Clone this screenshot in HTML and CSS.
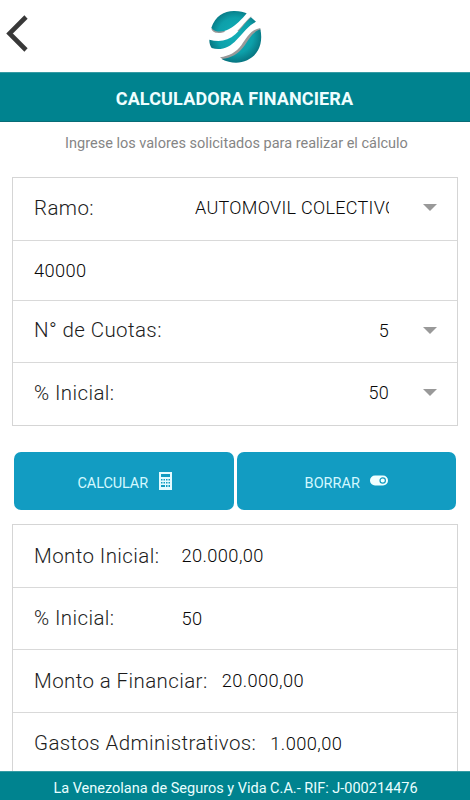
FILE: index.html
```html
<!DOCTYPE html>
<html lang="es">
<head>
<meta charset="utf-8">
<meta name="viewport" content="width=device-width">
<title>Calculadora Financiera</title>
<link rel="stylesheet" href="styles.css">
</head>
<body>
<div class="app">
  <header class="top">
    <svg class="back" viewBox="0 0 30 46" width="30" height="46"><path d="M26 7 9.500 23.500l16.500 16.500" fill="none" stroke="#383838" stroke-width="4.600"/></svg>
    <svg class="logo" viewBox="0 0 210 195" width="70" height="65">
      <defs>
        <radialGradient id="sea" gradientUnits="userSpaceOnUse" cx="106" cy="92" r="82"><stop offset="0" stop-color="#12adb6"/><stop offset=".65" stop-color="#0da0aa"/><stop offset="1" stop-color="#077480"/></radialGradient>
      </defs>
      <path d="M34 70C36 84 54 88 76 80L60 72Z" fill="#999"/>
      <path d="M34 68C46 32 74 17 104 18C120 18 132 21 140 25C126 42 108 62 86 73C66 83 44 82 34 68Z" fill="url(#sea)"/>
      <path d="M112 78C126 66 136 48 154 34L150 46L118 80Z" fill="#999"/>
      <path d="M28 104C58 112 84 108 106 88C124 72 134 54 153 37L168 50C144 62 130 84 110 104C88 128 62 138 35 129C30 122 28 114 28 104Z" fill="url(#sea)"/>
      <path d="M181 69C152 74 140 98 124 121C108 142 88 153 60 157L72 166C112 162 136 138 150 112C160 92 168 82 181 78Z" fill="#999"/>
      <path d="M181 73C157 80 145 105 132 124C114 148 94 159 65 162C106 184 154 172 174 136C184 118 186 94 181 73Z" fill="url(#sea)"/>
    </svg>
  </header>
  <h1 class="title">CALCULADORA FINANCIERA</h1>
  <p class="hint">Ingrese los valores solicitados para realizar el cálculo</p>
  <section class="card form">
    <div class="row r1"><span class="label">Ramo:</span><span class="value clip">AUTOMOVIL COLECTIVO</span><i class="caret"></i></div>
    <div class="row r2"><span class="input">40000</span></div>
    <div class="row r3"><span class="label">N° de Cuotas:</span><span class="value">5</span><i class="caret"></i></div>
    <div class="row r4"><span class="label">% Inicial:</span><span class="value">50</span><i class="caret"></i></div>
  </section>
  <div class="buttons">
    <div class="btn calc"><span>CALCULAR</span>
      <svg width="13" height="18" viewBox="0 0 13 18"><path fill="#e4fbff" fill-rule="evenodd" d="M0 0H13V18H0ZM2 2V5H11V2ZM2 7V8.500H3.500V7ZM4.500 7V8.500H6V7ZM7 7V8.500H8.500V7ZM9.500 7V8.500H11V7ZM2 10V11.500H3.500V10ZM4.500 10V11.500H6V10ZM7 10V11.500H8.500V10ZM9.500 10V11.500H11V10ZM2 13V15H6V13ZM7 13V15H8.500V13ZM9.500 13V15H11V13Z"/></svg>
    </div>
    <div class="btn erase"><span>BORRAR</span>
      <svg width="18" height="11" viewBox="0 0 18 11"><rect y=".5" width="18" height="10" rx="5" fill="#f2ffff"/><circle cx="12.700" cy="5.500" r="2.700" fill="none" stroke="#129cc2" stroke-width="1.200"/></svg>
    </div>
  </div>
  <section class="card results">
    <div class="row"><span class="label">Monto Inicial:</span><span class="amount col">20.000,00</span></div>
    <div class="row"><span class="label">% Inicial:</span><span class="amount col2">50</span></div>
    <div class="row"><span class="label">Monto a Financiar:</span><span class="amount">20.000,00</span></div>
    <div class="row"><span class="label">Gastos Administrativos:</span><span class="amount">1.000,00</span></div>
  </section>
  <footer class="foot">La Venezolana de Seguros y Vida C.A.- RIF: J-000214476</footer>
</div>
</body>
</html>
```
FILE: styles.css
```css
* { box-sizing: border-box; }
body { margin: 0; background: #fff; font-family: Roboto, "Liberation Sans", sans-serif; color: #1c1c1c; }
.app { height: 800px; display: flex; flex-direction: column; overflow: hidden; }
.top { height: 72px; flex: none; display: grid; grid-template-columns: 200px 70px 1fr; }
.back { margin: 10px 0 0; }
.logo { margin-top: 5px; }
.title { margin: 0; flex: none; height: 50px; background: #00838f; border-top: 1px solid #369ba4; border-bottom: 1px solid #086c76; color: #effeff; font-size: 18px; font-weight: 700; line-height: 52px; text-align: center; padding-right: 1px; letter-spacing: .14px; }
.hint { margin: 0; flex: none; height: 55px; padding: 12px 0 0 3px; font-size: 14.500px; line-height: 20px; text-align: center; color: #858585; }
.card { margin: 0 12px; border: 1px solid #d5d5d5; background: #fff; }
.form { flex: none; height: 249px; }
.row { display: flex; align-items: center; padding-left: 21px; border-bottom: 1px solid #d9d9d9; white-space: nowrap; }
.form .row { padding-bottom: 3px; }
.r1 { height: 63px; }
.form .r2 { height: 60px; padding-bottom: 0; }
.r3 { height: 62px; }
.r4 { height: 62px; }
.form .row:last-child { border-bottom: 0; }
.label { font-size: 20.500px; font-weight: 350; letter-spacing: .4px; }
.value { margin-left: auto; font-size: 18px; font-weight: 350; letter-spacing: .3px; color: #080808; }
.clip { width: 194px; overflow: hidden; letter-spacing: .3px; }
.input { font-size: 18.300px; font-weight: 350; letter-spacing: .35px; color: #080808; }
.caret { margin: 0 20px 0 34px; border: solid transparent; border-width: 7px 7px 0; border-top-color: #999; }
.buttons { display: grid; grid-template-columns: 1fr 1fr; flex: none; gap: 3px; height: 98px; padding: 26px 14px 14px; }
.btn { display: flex; align-items: center; justify-content: center; border-radius: 7px; background: #129cc2; color: #d4f8ff; font-size: 14.500px; padding-top: 5px; }
.calc { gap: 11px; padding-left: 2px; }
.calc span { letter-spacing: -.1px; }
.calc svg { margin-top: -5px; }
.erase { gap: 10px; }
.erase svg { margin-top: -6px; }
.results { flex: 1; min-height: 0; border-bottom: 0; overflow: hidden; }
.results .row { height: 62.500px; }
.amount { margin-left: 14px; font-size: 18.300px; font-weight: 350; letter-spacing: .4px; color: #080808; }
.col { margin-left: 22px; }
.col2 { margin-left: 67px; }
.foot { flex: none; height: 29px; background: #00838f; border-top: 1px solid #369ba4; color: #e9ffff; font-size: 14.500px; line-height: 33px; text-align: center; padding-left: 1px; }
```
